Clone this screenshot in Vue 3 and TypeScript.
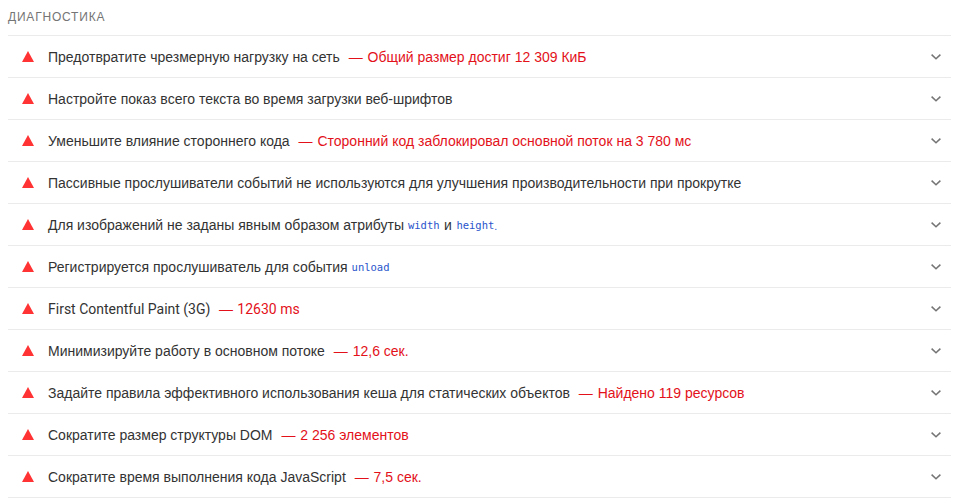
<script setup lang="ts">
interface Audit {
  title: string
  display?: string
  codes?: boolean
  code?: string
  latin?: boolean
}

const audits: Audit[] = [
  { title: 'Предотвратите чрезмерную нагрузку на сеть', display: 'Общий размер достиг 12 309 КиБ' },
  { title: 'Настройте показ всего текста во время загрузки веб-шрифтов' },
  { title: 'Уменьшите влияние стороннего кода', display: 'Сторонний код заблокировал основной поток на 3 780 мс' },
  { title: 'Пассивные прослушиватели событий не используются для улучшения производительности при прокрутке' },
  { title: 'Для изображений не заданы явным образом атрибуты', codes: true },
  { title: 'Регистрируется прослушиватель для события', code: 'unload' },
  { title: 'First Contentful Paint (3G)', display: '12630 ms', latin: true },
  { title: 'Минимизируйте работу в основном потоке', display: '12,6 сек.' },
  { title: 'Задайте правила эффективного использования кеша для статических объектов', display: 'Найдено 119 ресурсов' },
  { title: 'Сократите размер структуры DOM', display: '2 256 элементов' },
  { title: 'Сократите время выполнения кода JavaScript', display: '7,5 сек.' },
]
</script>

<template>
  <div class="page">
    <div class="group-title">ДИАГНОСТИКА</div>
    <div v-for="(audit, i) in audits" :key="i" class="audit" :class="{ latin: audit.latin }">
      <svg class="fail" width="12" height="11" viewBox="0 0 12 11"><path d="M6 0 L12 11 H0 Z" fill="#ff3333" /></svg>
      <span class="title">
        {{ audit.title }}
        <template v-if="audit.codes"><code>width</code><span class="conj">и</span><code>height</code><span class="dot">.</span></template>
        <code v-if="audit.code">{{ audit.code }}</code>
      </span>
      <span v-if="audit.display" class="display"><span class="dash">—</span> {{ audit.display }}</span>
      <svg class="chevron" width="12" height="8" viewBox="0 0 12 8"><path d="M1.6 1.6 L6 5.8 L10.4 1.6" fill="none" stroke="#757575" stroke-width="1.5" /></svg>
    </div>
  </div>
</template>

<style scoped>
.page {
  width: 943px;
  margin-left: 8px;
  font-family: "Liberation Sans", Roboto, sans-serif;
  font-size: 14px;
  color: #333333;
}

.group-title {
  height: 35px;
  line-height: 34px;
  font-size: 12px;
  letter-spacing: 0.8px;
  color: #757575;
}

.audit {
  height: 42px;
  box-sizing: border-box;
  border-top: 1px solid #ebebeb;
  display: flex;
  align-items: center;
  padding-left: 14px;
  padding-right: 9px;
}

.audit.latin {
  font-family: Roboto, "Liberation Sans", sans-serif;
}

.audit:last-child {
  height: 43px;
  border-bottom: 1px solid #ebebeb;
}

.fail {
  flex: none;
  margin-right: 14px;
}

.title {
  white-space: pre-wrap;
}

.display {
  margin-left: 5px;
  color: #e3111a;
}

.dash {
  font-family: "Liberation Sans", sans-serif;
  margin-right: 1px;
}

.conj {
  margin: 0 4.5px;
}

code {
  font-family: "DejaVu Sans Mono", "Liberation Mono", monospace;
  font-size: 10.5px;
  color: #2a55cc;
  position: relative;
  top: -1px;
}

.dot {
  font-size: 10.5px;
  color: #2a55cc;
}

.chevron {
  margin-left: auto;
}
</style>
